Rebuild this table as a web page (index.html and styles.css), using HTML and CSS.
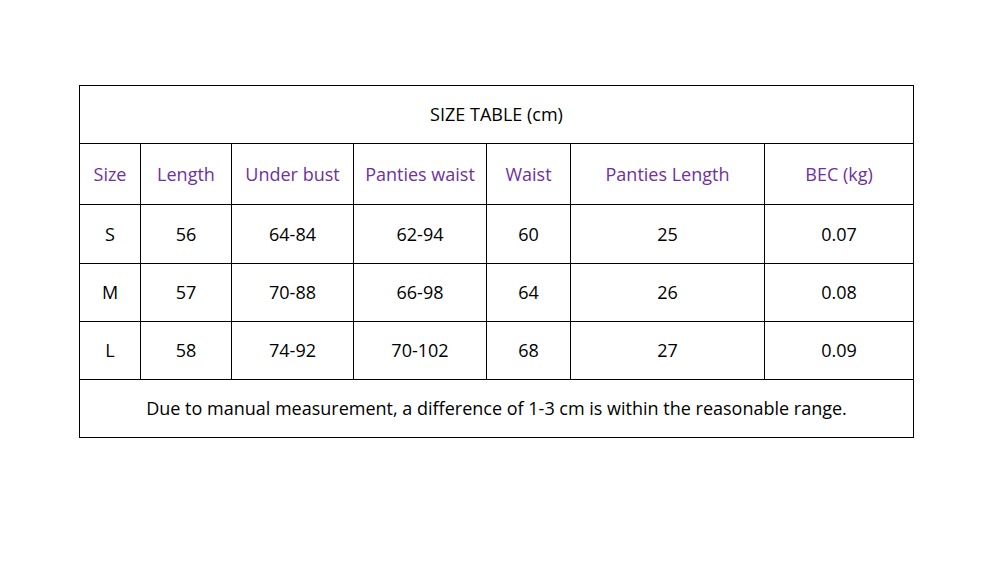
FILE: index.html
```html
<!DOCTYPE html>
<html>
<head>
<meta charset="utf-8">
<link rel="stylesheet" href="styles.css">
</head>
<body>
<div class="size-table">
  <div class="cell title">SIZE TABLE (cm)</div>
  <div class="cell head">Size</div>
  <div class="cell head">Length</div>
  <div class="cell head">Under bust</div>
  <div class="cell head">Panties waist</div>
  <div class="cell head">Waist</div>
  <div class="cell head">Panties Length</div>
  <div class="cell head">BEC (kg)</div>

  <div class="cell">S</div>
  <div class="cell">56</div>
  <div class="cell">64-84</div>
  <div class="cell">62-94</div>
  <div class="cell">60</div>
  <div class="cell">25</div>
  <div class="cell">0.07</div>

  <div class="cell">M</div>
  <div class="cell">57</div>
  <div class="cell">70-88</div>
  <div class="cell">66-98</div>
  <div class="cell">64</div>
  <div class="cell">26</div>
  <div class="cell">0.08</div>

  <div class="cell">L</div>
  <div class="cell">58</div>
  <div class="cell">74-92</div>
  <div class="cell">70-102</div>
  <div class="cell">68</div>
  <div class="cell">27</div>
  <div class="cell">0.09</div>

  <div class="cell note">Due to manual measurement, a difference of 1-3 cm is within the reasonable range.</div>
</div>
</body>
</html>
```

FILE: styles.css
```css
html, body {
  margin: 0;
  padding: 0;
  background: #ffffff;
}
body {
  padding: 85px 0 0 79px;
  font-family: "Open Sans", "Noto Sans", sans-serif;
  font-size: 18px;
  color: #000;
}
.size-table {
  display: grid;
  width: 833px;
  grid-template-columns: 60px 90px 121px 132px 83px 193px 148px;
  grid-template-rows: 57px 60px 58px 57px 57px 57px;
  gap: 1px;
  padding: 1px;
  background: #000;
}
.cell {
  background: #fff;
  display: flex;
  align-items: center;
  justify-content: center;
  white-space: nowrap;
  padding-bottom: 1px;
}
.title, .note {
  grid-column: 1 / -1;
}
.head {
  color: #7030a0;
}
```
